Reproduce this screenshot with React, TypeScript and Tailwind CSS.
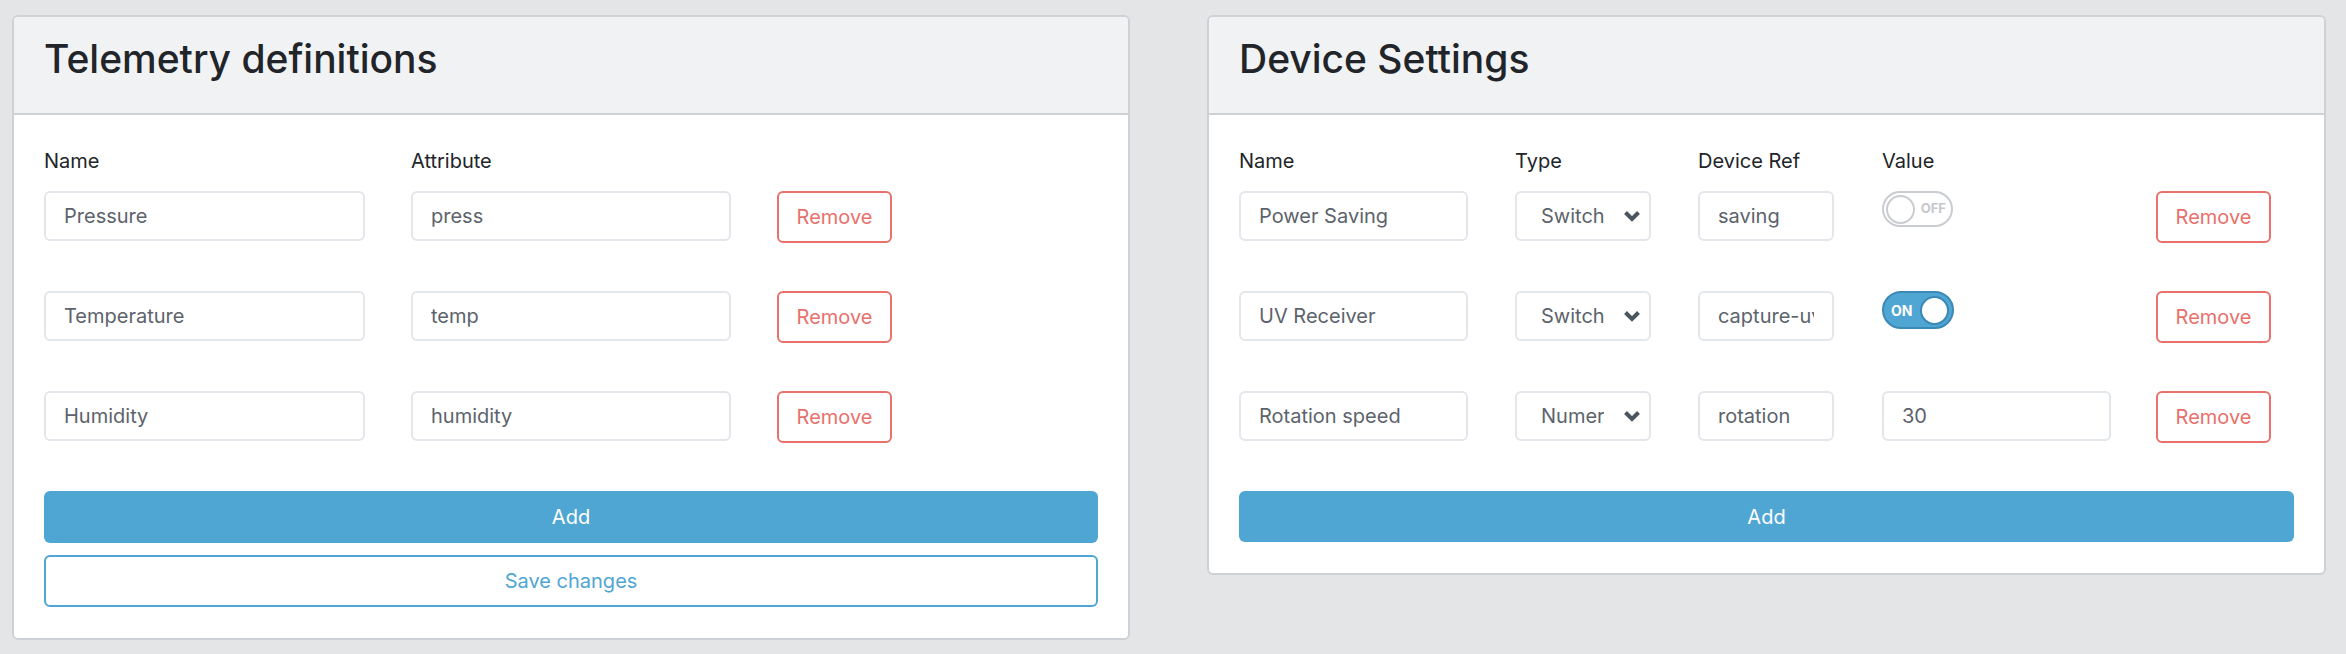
const inputCls =
  "h-[50px] rounded-[6px] border-2 border-[#e3e6ea] bg-white px-[18px] text-[20px] text-[#5c636c] outline-none";

function Field({ value, w }: { value: string; w: string }) {
  return <input readOnly value={value} className={`${inputCls} ${w} min-w-0`} />;
}

function RemoveButton() {
  return (
    <button className="h-[52px] w-[115px] shrink-0 rounded-[6px] border-2 border-[#e8716c] bg-white text-[20px] text-[#e8716c]">
      Remove
    </button>
  );
}

function Chevron() {
  return (
    <svg width="18" height="12" viewBox="0 0 18 12" className="shrink-0">
      <path d="M2.5 2.5 L9 9 L15.5 2.5" fill="none" stroke="#4b5560" strokeWidth="4" strokeLinejoin="miter" />
    </svg>
  );
}

function Select({ value }: { value: string }) {
  return (
    <div className={`${inputCls} flex w-[136px] shrink-0 items-center pl-[24px] pr-[8px]`}>
      <span className="w-[63px] overflow-hidden whitespace-nowrap">{value}</span>
      <span className="ml-auto">
        <Chevron />
      </span>
    </div>
  );
}

function Toggle({ on }: { on: boolean }) {
  if (on) {
    return (
      <div className="flex h-[38px] w-[72px] items-center justify-between rounded-full border-2 border-[#3b89b6] bg-[#4fa6d3] pl-[7px] pr-[3px]">
        <span className="text-[14px] font-bold text-white">ON</span>
        <span className="h-[29px] w-[29px] rounded-full border-2 border-[#3b89b6] bg-white" />
      </div>
    );
  }
  return (
    <div className="flex h-[36px] w-[71px] items-center justify-between rounded-full border-2 border-[#c9ccd0] bg-white pl-[2px] pr-[5px]">
      <span className="h-[29px] w-[29px] rounded-full border-2 border-[#c9ccd0] bg-white" />
      <span className="text-[13px] font-bold text-[#c5c8cc]">OFF</span>
    </div>
  );
}

function Card({ title, w, children }: { title: string; w: string; children: React.ReactNode }) {
  return (
    <div className={`${w} shrink-0 overflow-hidden rounded-[6px] border-2 border-[#ced2d6] bg-white`}>
      <div className="h-[98px] border-b-2 border-[#ced2d6] bg-[#f1f2f4] px-[30px] pt-[19px]">
        <h2 className="text-[39px] leading-[1.2] font-medium text-[#212529]">{title}</h2>
      </div>
      <div className="px-[30px] pt-[31px] pb-[31px]">{children}</div>
    </div>
  );
}

const label = "text-[20px] leading-[30px] text-[#212529]";

export default function App() {
  const telemetry = [
    ["Pressure", "press"],
    ["Temperature", "temp"],
    ["Humidity", "humidity"],
  ];

  return (
    <div className="flex min-h-[654px] items-start gap-[77px] bg-[#e4e5e7] pt-[15px] pl-[12px] font-['Inter',sans-serif]">
      {/* Telemetry */}
      <Card title="Telemetry definitions" w="w-[1118px]">
        <div className="mb-[15px] flex gap-[46px]">
          <div className={`${label} w-[321px]`}>Name</div>
          <div className={`${label} w-[320px]`}>Attribute</div>
        </div>
        <div className="flex flex-col gap-[48px]">
          {telemetry.map(([n, a]) => (
            <div key={n} className="flex items-start gap-[46px]">
              <Field value={n} w="w-[321px]" />
              <Field value={a} w="w-[320px]" />
              <RemoveButton />
            </div>
          ))}
          <div className="flex flex-col gap-[12px]">
            <button className="h-[52px] w-full rounded-[6px] bg-[#4fa6d3] text-[20px] text-white">Add</button>
            <button className="h-[52px] w-full rounded-[6px] border-2 border-[#4fa6d3] bg-white text-[20px] text-[#4fa6d3]">
              Save changes
            </button>
          </div>
        </div>
      </Card>

      {/* Device settings */}
      <Card title="Device Settings" w="w-[1119px]">
        <div className="mb-[15px] flex gap-[47px]">
          <div className={`${label} w-[229px]`}>Name</div>
          <div className={`${label} w-[136px]`}>Type</div>
          <div className={`${label} w-[137px]`}>Device Ref</div>
          <div className={`${label} w-[229px]`}>Value</div>
        </div>
        <div className="flex flex-col gap-[48px]">
          <div className="flex items-start">
            <Field value="Power Saving" w="w-[229px]" />
            <div className="ml-[47px]"><Select value="Switch" /></div>
            <div className="ml-[47px]"><Field value="saving" w="w-[136px]" /></div>
            <div className="ml-[48px] w-[229px]"><Toggle on={false} /></div>
            <div className="ml-[45px]"><RemoveButton /></div>
          </div>
          <div className="flex items-start">
            <Field value="UV Receiver" w="w-[229px]" />
            <div className="ml-[47px]"><Select value="Switch" /></div>
            <div className="ml-[47px]"><Field value="capture-uv" w="w-[136px]" /></div>
            <div className="ml-[48px] w-[229px]"><Toggle on={true} /></div>
            <div className="ml-[45px]"><RemoveButton /></div>
          </div>
          <div className="flex items-start">
            <Field value="Rotation speed" w="w-[229px]" />
            <div className="ml-[47px]"><Select value="Numeric" /></div>
            <div className="ml-[47px]"><Field value="rotation" w="w-[136px]" /></div>
            <div className="ml-[48px]"><Field value="30" w="w-[229px]" /></div>
            <div className="ml-[45px]"><RemoveButton /></div>
          </div>
          <button className="h-[51px] w-full rounded-[6px] bg-[#4fa6d3] text-[20px] text-white">Add</button>
        </div>
      </Card>
    </div>
  );
}
